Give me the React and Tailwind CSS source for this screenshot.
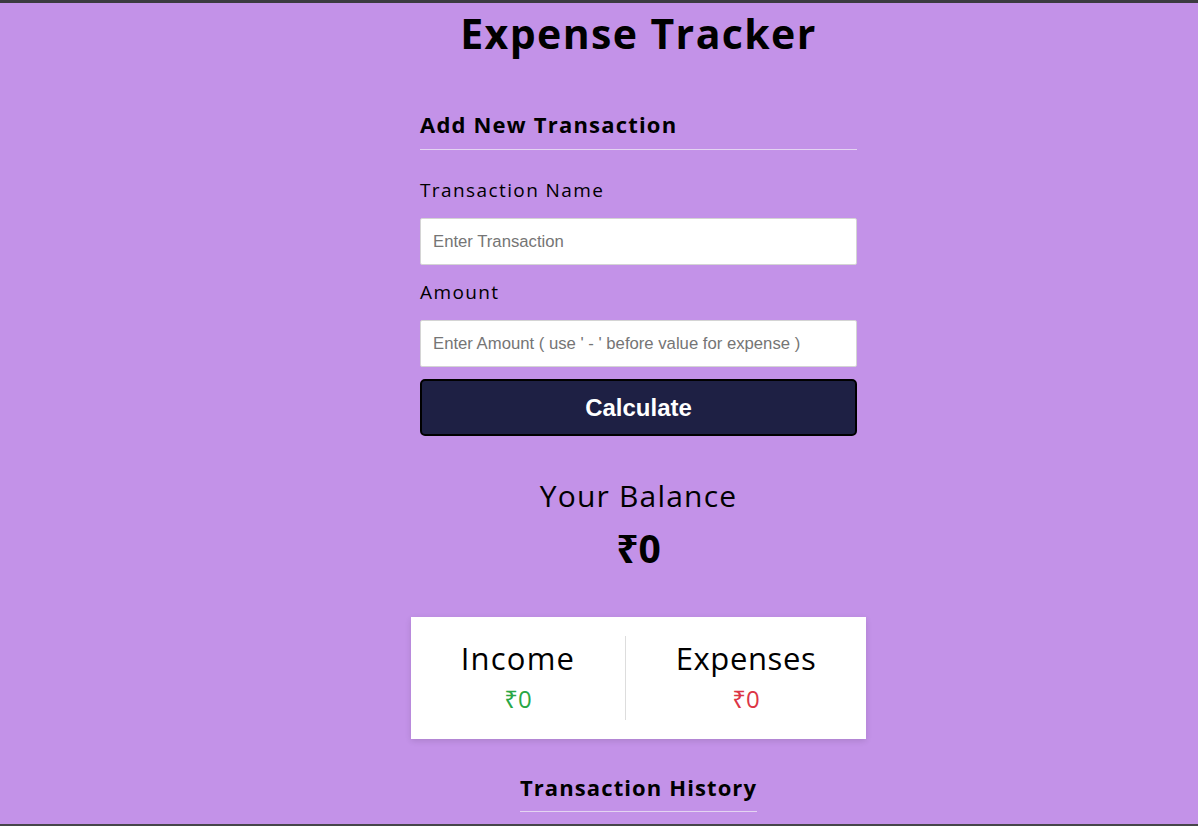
import React, { useState } from "react";

const font = { fontFamily: '"Open Sans", "Noto Sans", sans-serif' };
const arial = { fontFamily: '"Liberation Sans", Arial, sans-serif' };

export default function App() {
  const [name, setName] = useState("");
  const [amount, setAmount] = useState("");

  return (
    <div className="flex h-screen flex-col bg-[#c392e8]" style={font}>
      <div className="h-[3px] bg-[#3b3b40]" />
      <main className="flex flex-1 flex-col items-center overflow-hidden pl-[79px] text-black">
        <h1 className="mt-[4px] text-[41px] font-bold leading-[52px] tracking-[1.4px]">
          Expense Tracker
        </h1>

        <section className="mt-[50px] flex w-[437px] flex-col">
          <h3 className="text-[22px] font-bold leading-[30px] tracking-[1.2px]">Add New Transaction</h3>
          <div className="mt-[10px] h-px bg-[#e4d4f2]" />

          <label className="mt-[27px] text-[19px] leading-[26px] tracking-[1.4px]">Transaction Name</label>
          <input
            value={name}
            onChange={(e) => setName(e.target.value)}
            placeholder="Enter Transaction"
            className="mt-[15px] h-[47px] rounded-[2px] border border-[#d4d4d4] bg-white px-[12px] text-[16.7px] placeholder:text-[#757575]"
            style={arial}
          />

          <label className="mt-[14px] text-[19px] leading-[26px] tracking-[1.4px]">Amount</label>
          <input
            value={amount}
            onChange={(e) => setAmount(e.target.value)}
            placeholder="Enter Amount ( use ' - ' before value for expense )"
            className="mt-[15px] h-[47px] rounded-[2px] border border-[#d4d4d4] bg-white px-[12px] text-[16.7px] placeholder:text-[#757575]"
            style={arial}
          />

          <button
            className="mt-[12px] h-[57px] rounded-[5px] border-2 border-black bg-[#1e2044] text-[24px] font-bold text-white"
            style={arial}
          >
            Calculate
          </button>
        </section>

        <h2 className="mt-[42px] text-[30px] leading-[36px] tracking-[1.2px]">Your Balance</h2>
        <div className="mt-[12px] text-[39px] font-bold leading-[44px]">₹0</div>

        <div className="mt-[47px] flex h-[122px] w-[455px] items-center bg-white shadow-[0_2px_6px_rgba(0,0,0,0.12)]">
          <div className="flex flex-auto flex-col items-center">
            <h4 className="-mt-[4px] text-[31px] leading-[38px] tracking-[1.2px]">Income</h4>
            <p className="mt-[8px] text-[24px] leading-[28px] text-[#28a745]">₹0</p>
          </div>
          <div className="h-[84px] w-px bg-[#dddddd]" />
          <div className="flex flex-auto flex-col items-center">
            <h4 className="-mt-[4px] text-[31px] leading-[38px] tracking-[0.6px]">Expenses</h4>
            <p className="mt-[8px] text-[24px] leading-[28px] text-[#dc3545]">₹0</p>
          </div>
        </div>

        <h3 className="mt-[33px] border-b border-[#e4d4f2] pb-[9px] text-[22px] font-bold leading-[30px] tracking-[1.1px]">
          Transaction History
        </h3>
      </main>
      <div className="h-[2px] bg-[#46464a]" />
    </div>
  );
}
